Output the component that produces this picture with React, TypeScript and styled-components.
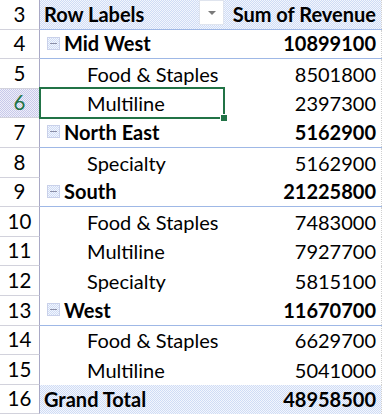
import React from "react";
import styled, { createGlobalStyle, css } from "styled-components";

const GlobalStyle = createGlobalStyle`
  html, body { margin: 0; padding: 0; background: #ffffff; }
  body { font-family: "Lato", "Liberation Sans", sans-serif; }
`;

type Kind = "header" | "group" | "item" | "total";

interface RowData {
  n: number;
  kind: Kind;
  label: string;
  value: string;
  selected?: boolean;
}

const rows: RowData[] = [
  { n: 3, kind: "header", label: "Row Labels", value: "Sum of Revenue" },
  { n: 4, kind: "group", label: "Mid West", value: "10899100" },
  { n: 5, kind: "item", label: "Food & Staples", value: "8501800" },
  { n: 6, kind: "item", label: "Multiline", value: "2397300", selected: true },
  { n: 7, kind: "group", label: "North East", value: "5162900" },
  { n: 8, kind: "item", label: "Specialty", value: "5162900" },
  { n: 9, kind: "group", label: "South", value: "21225800" },
  { n: 10, kind: "item", label: "Food & Staples", value: "7483000" },
  { n: 11, kind: "item", label: "Multiline", value: "7927700" },
  { n: 12, kind: "item", label: "Specialty", value: "5815100" },
  { n: 13, kind: "group", label: "West", value: "11670700" },
  { n: 14, kind: "item", label: "Food & Staples", value: "6629700" },
  { n: 15, kind: "item", label: "Multiline", value: "5041000" },
  { n: 16, kind: "total", label: "Grand Total", value: "48958500" },
];

const blueDither = css`
  background-color: #e2eaf9;
  background-image: repeating-conic-gradient(#cfdcf5 0 25%, #f3f6fd 0 50%);
  background-size: 2px 2px;
`;

const Sheet = styled.div`
  display: flex;
  flex-direction: column;
  width: 384px;
  height: 416px;
  overflow: hidden;
`;

const Row = styled.div`
  display: flex;
  height: 29.6px;
  flex: none;
`;

const RowHeader = styled.div<{ $selected?: boolean }>`
  box-sizing: border-box;
  width: 40px;
  flex: none;
  display: flex;
  align-items: flex-end;
  justify-content: center;
  padding-bottom: 3px;
  font-size: 20.5px;
  line-height: 24px;
  color: ${(p) => (p.$selected ? "#217346" : "#000")};
  border-right: 1px solid #a9a9c6;
  border-bottom: 1px solid #d2d2dc;
  ${(p) =>
    p.$selected &&
    css`
      background-color: #d6d7ef;
      background-image: repeating-conic-gradient(#c7c9ea 0 25%, #eeeef9 0 50%);
      background-size: 2px 2px;
    `}
`;

const Body = styled.div<{ $kind: Kind }>`
  display: flex;
  box-sizing: border-box;
  ${(p) => (p.$kind === "header" || p.$kind === "total") && blueDither}
  ${(p) =>
    (p.$kind === "header" || p.$kind === "group") &&
    css`
      border-bottom: 1px solid #9fb8e6;
    `}
  font-weight: ${(p) => (p.$kind === "item" ? 400 : 700)};
  color: #000;
`;

const LabelCell = styled.div<{ $kind: Kind }>`
  position: relative;
  box-sizing: border-box;
  width: 186px;
  display: flex;
  align-items: flex-end;
  padding-bottom: 3px;
  padding-left: ${(p) =>
    p.$kind === "item" ? "47px" : p.$kind === "group" ? "7px" : "4px"};
  font-size: 20px;
  line-height: 24px;
  white-space: nowrap;
`;

const ValueCell = styled.div`
  box-sizing: border-box;
  width: 156px;
  display: flex;
  align-items: flex-end;
  justify-content: flex-end;
  padding-bottom: 3px;
  padding-right: 5px;
  font-size: 20px;
  line-height: 24px;
  white-space: nowrap;
  border-right: 1px dotted #d0d0d0;
`;

const Collapse = styled.span`
  box-sizing: border-box;
  width: 13px;
  height: 13px;
  align-self: flex-start;
  margin-top: 7px;
  margin-right: 4px;
  flex: none;
  display: flex;
  align-items: center;
  justify-content: center;
  border: 1px solid #c9d1ea;
  ${blueDither}
  &::after {
    content: "";
    width: 7px;
    height: 1px;
    background: #8a8ea6;
  }
`;

const FilterButton = styled.span`
  box-sizing: border-box;
  width: 25px;
  height: 25px;
  margin-left: auto;
  margin-right: 2px;
  align-self: center;
  display: flex;
  align-items: center;
  justify-content: center;
  background: #ffffff;
  border: 1px solid #dfe4ee;
  &::after {
    content: "";
    width: 0;
    height: 0;
    border-left: 4px solid transparent;
    border-right: 4px solid transparent;
    border-top: 4px solid #7a7a7a;
  }
`;

const Selection = styled.div`
  position: absolute;
  left: -1px;
  top: -2px;
  width: 186px;
  height: 32px;
  box-sizing: border-box;
  border: 2px solid #217346;
  pointer-events: none;
  &::after {
    content: "";
    position: absolute;
    right: -5px;
    bottom: -5px;
    width: 6px;
    height: 6px;
    background: #217346;
    border: 1px solid #ffffff;
  }
`;

export default function App() {
  return (
    <>
      <GlobalStyle />
      <Sheet>
        {rows.map((r) => (
          <Row key={r.n}>
            <RowHeader $selected={r.selected}>{r.n}</RowHeader>
            <Body $kind={r.kind}>
              <LabelCell $kind={r.kind}>
                {r.kind === "group" && <Collapse />}
                {r.label}
                {r.kind === "header" && <FilterButton />}
                {r.selected && <Selection />}
              </LabelCell>
              <ValueCell>{r.value}</ValueCell>
            </Body>
          </Row>
        ))}
      </Sheet>
    </>
  );
}
